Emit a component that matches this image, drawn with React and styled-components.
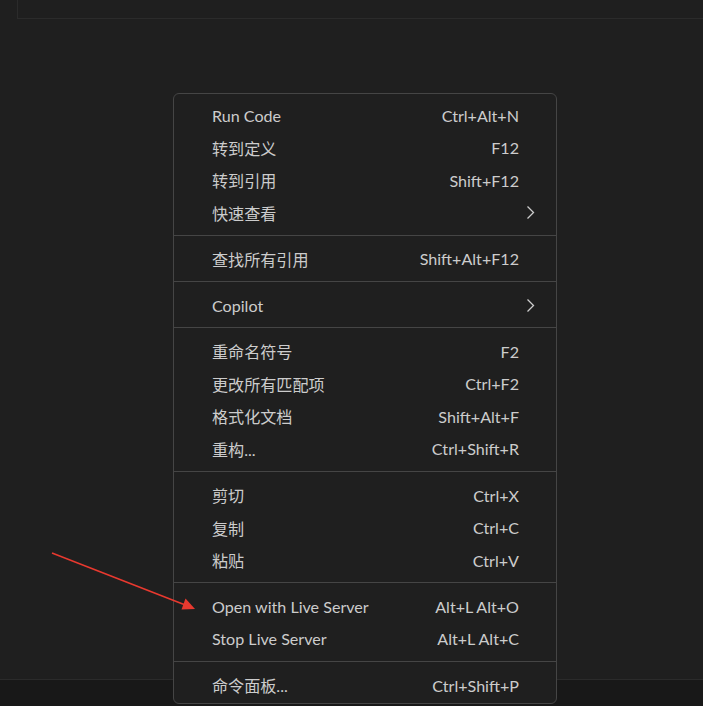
import React from "react";
import styled, { createGlobalStyle } from "styled-components";

const Global = createGlobalStyle`
  html, body { margin: 0; padding: 0; background: #1f1f1f; }
  body { font-family: Lato, "Noto Sans CJK SC", sans-serif; }
  * { box-sizing: border-box; }
`;

const Page = styled.div`
  position: relative;
  width: 703px;
  height: 706px;
  overflow: hidden;
  background: #1f1f1f;
  display: flex;
  flex-direction: column;
`;

const TopPanel = styled.div`
  margin-left: 17px;
  height: 19px;
  border-left: 1px solid #2b2b2b;
  border-bottom: 1px solid #2b2b2b;
`;

const Editor = styled.div`
  flex: 1;
`;

const StatusPanel = styled.div`
  height: 27px;
  background: #181818;
  border-top: 1px solid #2b2b2b;
`;

const Menu = styled.div`
  position: absolute;
  left: 173px;
  top: 93px;
  width: 384px;
  padding: 4.9px 0 2px;
  background: #1f1f1f;
  border: 1px solid #454545;
  border-radius: 6px;
  color: #cccccc;
  font-family: Lato, "Noto Sans CJK SC", sans-serif;
  font-size: 16.1px;
`;

const Item = styled.div`
  display: flex;
  align-items: center;
  height: 32.5px;
  padding: 0 ${(p) => (p.$sub ? "21px" : "37px")} 0 38px;
  white-space: nowrap;
`;

const Label = styled.span`
  flex: 1;
`;

const Keys = styled.span`
  text-align: right;
`;

const Separator = styled.div`
  height: 1px;
  margin: 5.75px 0 7px;
  background: #454545;
`;

const Chevron = () => (
  <svg width="9" height="15" viewBox="0 0 9 15" fill="none">
    <path d="M1.5 1.5 L7.5 7.5 L1.5 13.5" stroke="#cccccc" strokeWidth="1.3" />
  </svg>
);

const Annotation = styled.svg`
  position: absolute;
  left: 0;
  top: 0;
  pointer-events: none;
`;

const groups = [
  [
    { label: "Run Code", keys: "Ctrl+Alt+N" },
    { label: "转到定义", keys: "F12" },
    { label: "转到引用", keys: "Shift+F12" },
    { label: "快速查看", sub: true },
  ],
  [{ label: "查找所有引用", keys: "Shift+Alt+F12" }],
  [{ label: "Copilot", sub: true }],
  [
    { label: "重命名符号", keys: "F2" },
    { label: "更改所有匹配项", keys: "Ctrl+F2" },
    { label: "格式化文档", keys: "Shift+Alt+F" },
    { label: "重构...", keys: "Ctrl+Shift+R" },
  ],
  [
    { label: "剪切", keys: "Ctrl+X" },
    { label: "复制", keys: "Ctrl+C" },
    { label: "粘贴", keys: "Ctrl+V" },
  ],
  [
    { label: "Open with Live Server", keys: "Alt+L Alt+O" },
    { label: "Stop Live Server", keys: "Alt+L Alt+C" },
  ],
  [{ label: "命令面板...", keys: "Ctrl+Shift+P" }],
];

export default function App() {
  return (
    <Page>
      <Global />
      <TopPanel />
      <Editor />
      <StatusPanel />
      <Menu>
        {groups.map((g, gi) => (
          <React.Fragment key={gi}>
            {gi > 0 && <Separator />}
            {g.map((it) => (
              <Item key={it.label} $sub={it.sub}>
                <Label>{it.label}</Label>
                {it.sub ? <Chevron /> : <Keys>{it.keys}</Keys>}
              </Item>
            ))}
          </React.Fragment>
        ))}
      </Menu>
      <Annotation width="703" height="706" viewBox="0 0 703 706">
        <line x1="52" y1="553" x2="184" y2="604.5" stroke="#e8392f" strokeWidth="1.6" />
        <polygon points="195,609 181.5,609.5 185.5,598.5" fill="#e8392f" />
      </Annotation>
    </Page>
  );
}
